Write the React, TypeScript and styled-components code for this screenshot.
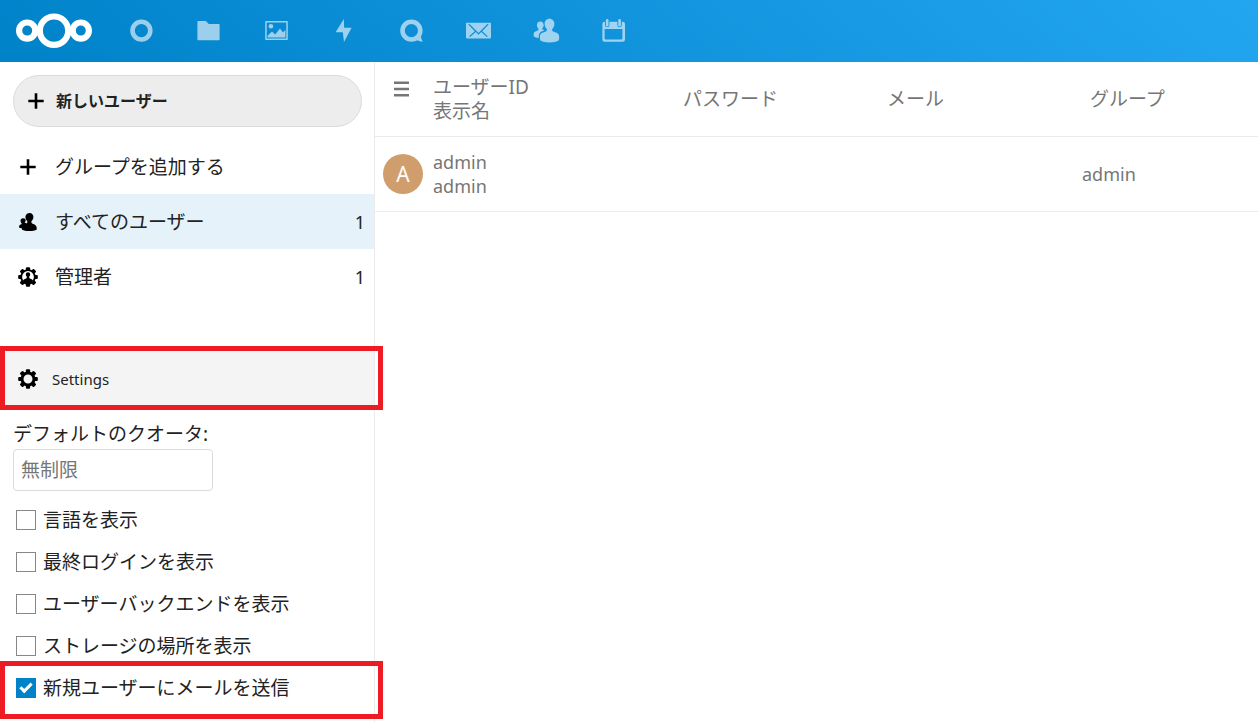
import React, { useState } from 'react';
import styled, { createGlobalStyle } from 'styled-components';

const GlobalStyle = createGlobalStyle`
  *, *::before, *::after { box-sizing: border-box; }
  body {
    margin: 0;
    background: #fff;
    color: #222;
    font-family: 'Noto Sans', 'Noto Sans CJK JP', sans-serif;
    font-size: 19px;
    line-height: 24px;
  }
  button, input { font-family: inherit; }
`;

const Header = styled.header`
  display: flex;
  align-items: center;
  height: 62px;
  padding-left: 15px;
  background: linear-gradient(40deg, #0082c9 0%, #23a6f0 100%);
`;

const LogoLink = styled.a`
  display: block;
  width: 78px;
  height: 36px;
`;

const AppMenu = styled.nav`
  display: grid;
  grid-template-columns: repeat(8, 1fr);
  width: 540px;
  margin-left: 14px;
`;

const AppLink = styled.a`
  display: flex;
  justify-content: center;
  color: #fff;
  opacity: 0.6;
`;

const Layout = styled.div`
  display: flex;
  min-height: calc(100vh - 62px);
`;

const Sidebar = styled.aside`
  flex: none;
  width: 375px;
  border-right: 1px solid #ebebeb;
`;

const NewUserButton = styled.button`
  display: flex;
  align-items: center;
  gap: 12px;
  width: calc(100% - 25px);
  height: 52px;
  margin: 13px 12px 12px 13px;
  padding: 0 14px;
  border: 1px solid #dbdbdb;
  border-radius: 26px;
  background: #ededed;
  color: #222;
  font-size: 16px;
  font-weight: 700;
  line-height: 24px;
`;

const EntryList = styled.ul`
  margin: 0;
  padding: 0;
  list-style: none;
`;

const Entry = styled.a<{ $active?: boolean }>`
  display: flex;
  align-items: center;
  gap: 17px;
  height: 55px;
  padding: 0 9px 0 18px;
  background: ${(p) => (p.$active ? '#e5f2fa' : 'transparent')};
  color: #222;
  text-decoration: none;
`;

const Count = styled.span`
  margin-left: auto;
  font-size: 18px;
`;

const Settings = styled.section`
  margin-top: 42px;
`;

const Framed = styled.div`
  position: relative;
`;

const Frame = styled.div<{ $top: number; $bottom: number }>`
  position: absolute;
  top: ${(p) => p.$top}px;
  right: -9px;
  bottom: ${(p) => p.$bottom}px;
  left: 0;
  border: 5px solid #ed1c24;
  pointer-events: none;
`;

const SettingsButton = styled.button`
  display: flex;
  align-items: center;
  gap: 14px;
  width: 100%;
  height: 64px;
  padding: 2px 18px 0;
  border: 0;
  background: #f4f4f4;
  color: #222;
  font-size: 15px;
`;

const SettingsBody = styled.div`
  padding-top: 12px;
`;

const QuotaField = styled.div`
  display: flex;
  flex-direction: column;
  align-items: flex-start;
  gap: 3px;
  margin-bottom: 8px;
  padding-left: 13px;
`;

const QuotaInput = styled.input`
  width: 200px;
  height: 42px;
  padding: 0 7px;
  border: 1px solid #dbdbdb;
  border-radius: 4px;
  background: #fff;
  color: #222;
  font-size: 19px;
  &::placeholder { color: #767676; }
`;

const Option = styled.label`
  display: flex;
  align-items: center;
  gap: 7px;
  height: 42px;
  padding-left: 16px;
`;

const Checkbox = styled.input`
  appearance: none;
  display: grid;
  place-items: center;
  width: 20px;
  height: 20px;
  margin: 0;
  border: 1px solid #878787;
  background: #fff;
  &:checked {
    border-color: #0082c9;
    background: #0082c9;
  }
  &:checked::before {
    content: '';
    width: 12px;
    height: 7px;
    margin-bottom: 4px;
    border: solid #fff;
    border-width: 0 0 3px 3px;
    transform: rotate(-45deg);
  }
`;

const Main = styled.main`
  flex: 1;
  min-width: 0;
`;

const UserTable = styled.table`
  width: 100%;
  table-layout: fixed;
  border-spacing: 0;
  color: #767676;
`;

const Column = styled.col<{ $width?: number }>`
  width: ${(p) => (p.$width ? `${p.$width}px` : 'auto')};
`;

const Row = styled.tr`
  height: 75px;
  & > * { border-bottom: 1px solid #ebebeb; }
`;

const HeadCell = styled.th<{ $inset?: boolean }>`
  padding: 0 0 0 ${(p) => (p.$inset ? 8 : 0)}px;
  font-weight: 400;
  text-align: left;
`;

const MenuCell = styled.th`
  padding: 19px 0 0 19px;
  text-align: left;
  vertical-align: top;
`;

const Cell = styled.td`
  padding: 0;
  font-size: 18px;
`;

const AvatarCell = styled.td`
  padding: 0 0 0 8px;
`;

const Avatar = styled.div`
  width: 40px;
  height: 40px;
  border-radius: 50%;
  background: #d09e6d;
  color: #fff;
  font-size: 21px;
  line-height: 40px;
  text-align: center;
`;

const Svg = styled.svg`
  display: block;
  flex: none;
`;

const Logo = () => (
  <Svg width="78" height="36" viewBox="0 0 78 36" fill="none" stroke="#fff" strokeWidth="6.2">
    <circle cx="12.2" cy="17.6" r="8.1" />
    <circle cx="39" cy="17.7" r="14.2" />
    <circle cx="65.8" cy="17.6" r="8.1" />
  </Svg>
);

const appIcons: { label: string; art: React.ReactNode }[] = [
  {
    label: 'ダッシュボード',
    art: <circle cx="14.4" cy="13.6" r="8.9" fill="none" stroke="currentColor" strokeWidth="4.6" />,
  },
  {
    label: 'ファイル',
    art: <path d="M4.2 4h7.600l3 3h10a.8.8 0 0 1 .8.8v14.700a.8.8 0 0 1-.8.8H4.200a.8.8 0 0 1-.8-.8V4.800a.8.8 0 0 1 .8-.8z" />,
  },
  {
    label: '写真',
    art: (
      <>
        <path
          fillRule="evenodd"
          d="M4 4h21a.8.8 0 0 1 .8.8v17.400a.8.8 0 0 1-.8.8H4a.8.8 0 0 1-.8-.8V4.800A.8.8 0 0 1 4 4zm.7 1.500v16h19.600v-16z"
        />
        <circle cx="8.9" cy="9.300" r="2.300" />
        <path d="M5.600 20.400v-1.600l4.400-4.400 3.200 3 4.800-5.800 3 4 2.400-2.600v7.400z" />
      </>
    ),
  },
  { label: 'アクティビティ', art: <path d="M14.8 2 6.6 15.2h7.2L15 25l7.6-14.2h-7.4z" /> },
  {
    label: 'トーク',
    art: (
      <>
        <circle cx="14.4" cy="13.6" r="8.9" fill="none" stroke="currentColor" strokeWidth="4.6" />
        <path d="M23.8 17.4c-.2 2.6.8 5 2 7.4-2.4-.2-4.6-.8-7-2.2z" />
      </>
    ),
  },
  {
    label: 'メール',
    art: (
      <path
        fillRule="evenodd"
        d="M2.8 5.8h23.4a.8.8 0 0 1 .8.8v14a.8.8 0 0 1-.8.8H2.8a.8.8 0 0 1-.8-.8v-14a.8.8 0 0 1 .8-.8zM4.400 7.600l6.400 6.600-5.600 5 .9.9 5.700-5.100 2.700 2.800 2.700-2.800 5.700 5.100.9-.9-5.600-5 6.400-6.600-.9-.9-9.200 9.400-9.200-9.400z"
      />
    ),
  },
  {
    label: '連絡先',
    art: (
      <path d="M17.4 1.8c-2.8 0-4.8 2.2-4.8 4.9 0 2 .8 4.1 2.2 5.2.3 1.2 0 2-.9 2.5-2.2.9-5.4 1.4-5.8 3.7-.3 1.7-.2 3.6 0 5.2 2.2 1.6 5.6 2.1 9.3 2.1s7.300-.5 9.500-2.100c.3-1.600.4-3.500 0-5.200-.5-2.300-3.600-2.800-5.800-3.700-.9-.5-1.200-1.300-.9-2.500 1.400-1.100 2.200-3.200 2.200-5.200 0-2.700-2.200-4.900-5-4.900zM8.300 4.400c-2 0-3.400 1.600-3.400 3.500 0 1.500.5 2.900 1.500 3.700.2.900 0 1.500-.6 1.800-1.600.7-3.700 1-4 2.700-.2 1.200-.1 2.500 0 3.500 1.200.8 3 1.200 5 1.300 0-1.300-.1-2.400.2-3.500.6-2.400 3-3.300 5.500-4.200-1.600-.6-2.300-.7-2.400-1.600 1-.8 1.600-2.200 1.600-3.700 0-1.900-1.400-3.500-3.400-3.500z" />
    ),
  },
  {
    label: 'カレンダー',
    art: (
      <>
        <path
          fillRule="evenodd"
          d="M5.600 4.800h.4v3.200a2.200 2.200 0 0 0 4.400 0V4.800h8v3.200a2.200 2.200 0 0 0 4.400 0V4.800h1a2.200 2.200 0 0 1 2.200 2.200v15.500a2.200 2.200 0 0 1-2.200 2.200H5.600a2.200 2.200 0 0 1-2.200-2.200V7a2.200 2.200 0 0 1 2.200-2.200zM5.600 12v9.600a.8.8 0 0 0 .8.8h16.200a.8.8 0 0 0 .8-.8V12z"
        />
        <rect x="6.900" y="2" width="2.600" height="7.600" rx="1.300" />
        <rect x="19.300" y="2" width="2.600" height="7.600" rx="1.300" />
      </>
    ),
  },
];

const PlusIcon = ({ size }: { size: number }) => (
  <Svg width={size} height="20" viewBox={`${(20 - size) / 2} 0 ${size} 20`} fill="#000">
    <path d="M8.700 2.300h2.600v6.400h6.400v2.600h-6.400v6.400H8.700v-6.400H2.300V8.700h6.400z" />
  </Svg>
);

const UsersIcon = () => (
  <Svg width="20" height="20" viewBox="0 0 20 20" fill="#000">
    <path d="M11.600.9c-2.500 0-4.200 1.700-4.200 4 0 1.700.7 3.200 1.900 4.100.2 1.600-.2 2.200-1.400 2.700-2 .8-3.700 1.500-4 3.700-.1.900 0 1.800.2 2.400 1.600.9 3.800 1.300 7.200 1.300s5.700-.5 7.300-1.400c.2-.8.2-1.500 0-2.400-.4-2.100-2-2.800-3.900-3.600-1.200-.5-1.500-1.100-1.200-2.700 1.200-.9 1.900-2.400 1.900-4.100 0-2.300-1.500-4-3.800-4z" />
    <path d="M5 6.200c-1.500 0-2.500 1.100-2.500 2.500 0 1.100.4 1.900 1.100 2.500 0 .8-.2 1.100-.9 1.400-1 .4-1.500.9-1.600 1.900l.1 1.200 3.200.8 4-5.200-1.800-.7c.7-.5 1.100-1.300 1.100-2.300 0-1.400-1.100-2.100-2.600-2.100z" />
  </Svg>
);

const GearTeeth = () => (
  <g fill="#000">
    {[0, 45, 90, 135, 180, 225, 270, 315].map((angle) => (
      <rect key={angle} x="7.900" y="0.200" width="4.200" height="4" rx="1" transform={`rotate(${angle} 10 10)`} />
    ))}
  </g>
);

const GearIcon = () => (
  <Svg width="20" height="20" viewBox="0 0 20 20">
    <GearTeeth />
    <circle cx="10" cy="10" r="6" fill="#f4f4f4" stroke="#000" strokeWidth="3" />
  </Svg>
);

const AdminIcon = () => (
  <Svg width="20" height="20" viewBox="0 0 20 20">
    <GearTeeth />
    <circle cx="10" cy="10" r="6.800" fill="#fff" stroke="#000" strokeWidth="1.800" />
    <path d="M10 5.200c-1.300 0-2.200.9-2.200 2.200 0 1 .4 1.800 1 2.300.1 1-.1 1.400-.8 1.800-1.200.5-2.600 1-3 2.300 1.200 1.800 3 2.800 5 2.800s3.800-1 5-2.800c-.4-1.300-1.800-1.800-3-2.300-.7-.4-.9-.8-.8-1.800.6-.5 1-1.300 1-2.300 0-1.300-.9-2.200-2.200-2.200z" />
  </Svg>
);

const MenuIcon = () => (
  <Svg width="15" height="16" viewBox="0 0 15 16" fill="#767676">
    <path d="M0 .5h15V3H0zM0 6.800h15v2.500H0zM0 13h15v2.500H0z" />
  </Svg>
);

const options = [
  '言語を表示',
  '最終ログインを表示',
  'ユーザーバックエンドを表示',
  'ストレージの場所を表示',
];

export default function App() {
  const [sendMail, setSendMail] = useState(true);

  return (
    <>
      <GlobalStyle />
      <Header>
        <LogoLink href="#" aria-label="Nextcloud">
          <Logo />
        </LogoLink>
        <AppMenu>
          {appIcons.map(({ label, art }) => (
            <AppLink key={label} href="#" aria-label={label}>
              <Svg width="28" height="28" viewBox="0 0 28 28" fill="currentColor">
                {art}
              </Svg>
            </AppLink>
          ))}
        </AppMenu>
      </Header>
      <Layout>
        <Sidebar>
          <NewUserButton type="button">
            <PlusIcon size={16} />
            新しいユーザー
          </NewUserButton>
          <EntryList>
            <li>
              <Entry href="#">
                <PlusIcon size={20} />
                グループを追加する
              </Entry>
            </li>
            <li>
              <Entry href="#" $active>
                <UsersIcon />
                すべてのユーザー
                <Count>1</Count>
              </Entry>
            </li>
            <li>
              <Entry href="#">
                <AdminIcon />
                管理者
                <Count>1</Count>
              </Entry>
            </li>
          </EntryList>
          <Settings>
            <Framed>
              <SettingsButton type="button">
                <GearIcon />
                Settings
              </SettingsButton>
              <Frame $top={0} $bottom={0} />
            </Framed>
            <SettingsBody>
              <QuotaField>
                <label htmlFor="quota">デフォルトのクオータ:</label>
                <QuotaInput id="quota" type="text" placeholder="無制限" />
              </QuotaField>
              {options.map((label) => (
                <Option key={label}>
                  <Checkbox type="checkbox" />
                  {label}
                </Option>
              ))}
              <Framed>
                <Option>
                  <Checkbox
                    type="checkbox"
                    checked={sendMail}
                    onChange={(event) => setSendMail(event.target.checked)}
                  />
                  新規ユーザーにメールを送信
                </Option>
                <Frame $top={-6} $bottom={-10} />
              </Framed>
            </SettingsBody>
          </Settings>
        </Sidebar>
        <Main>
          <UserTable>
            <colgroup>
              <Column $width={58} />
              <Column $width={242} />
              <Column $width={204} />
              <Column $width={203} />
              <Column />
            </colgroup>
            <thead>
              <Row>
                <MenuCell>
                  <MenuIcon />
                </MenuCell>
                <HeadCell>
                  ユーザーID
                  <br />
                  表示名
                </HeadCell>
                <HeadCell $inset>パスワード</HeadCell>
                <HeadCell $inset>メール</HeadCell>
                <HeadCell $inset>グループ</HeadCell>
              </Row>
            </thead>
            <tbody>
              <Row>
                <AvatarCell>
                  <Avatar>A</Avatar>
                </AvatarCell>
                <Cell>
                  admin
                  <br />
                  admin
                </Cell>
                <Cell />
                <Cell />
                <Cell>admin</Cell>
              </Row>
            </tbody>
          </UserTable>
        </Main>
      </Layout>
    </>
  );
}
